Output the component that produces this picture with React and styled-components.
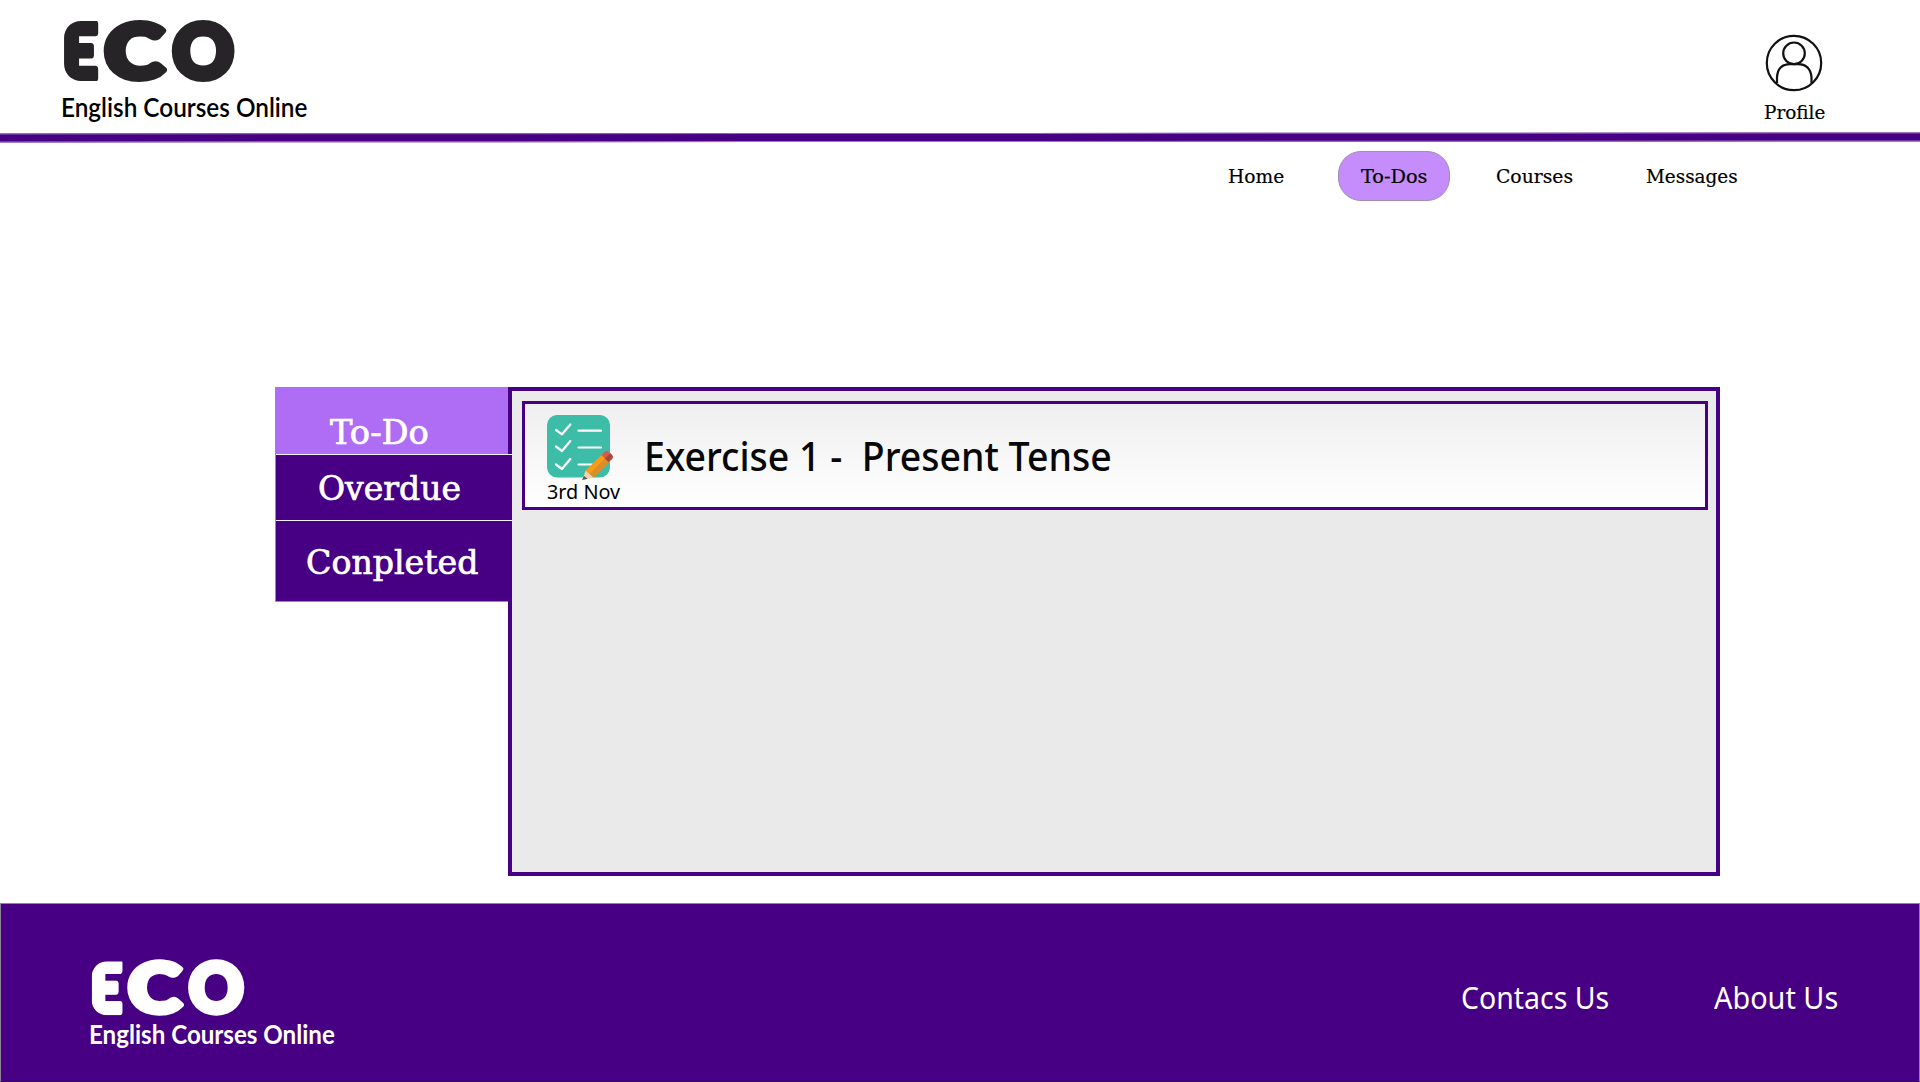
import React, { useId, useLayoutEffect, useRef, useState } from "react";
import styled, { createGlobalStyle } from "styled-components";

const purple = "#470084";
const slab = '"DejaVu Serif", "Liberation Serif", serif';
const sans = '"Noto Sans", "Open Sans", sans-serif';
const rounded = 'Lato, "Open Sans", sans-serif';

const Global = createGlobalStyle`
  body { margin: 0; background: #fff; color: #000; overflow: hidden; }
  * { box-sizing: border-box; }
`;

const Page = styled.div`
  width: 1920px;
  height: 1082px;
  display: flex;
  flex-direction: column;
  overflow: hidden;
`;

const FitBox = styled.span`
  display: block;
  width: ${(p) => p.$width}px;
  height: ${(p) => p.$line}px;
  line-height: ${(p) => p.$line}px;
  font-family: ${(p) => p.$family};
  font-size: ${(p) => p.$size}px;
  font-weight: ${(p) => p.$weight || 400};
  -webkit-text-stroke: ${(p) => p.$stroke || 0}px currentColor;
  white-space: pre;
`;
const FitInner = styled.span`
  display: inline-block;
  transform-origin: left center;
`;

/* Keeps a label at a set width whatever face it falls back to. */
function Fit({ width, line, family, size, weight, stroke, children }) {
  const ref = useRef(null);
  const [scale, setScale] = useState(1);
  useLayoutEffect(() => {
    setScale(width / ref.current.offsetWidth);
  }, [width, children]);
  return (
    <FitBox $width={width} $line={line} $family={family} $size={size} $weight={weight} $stroke={stroke}>
      <FitInner ref={ref} style={{ transform: `scaleX(${scale})` }}>{children}</FitInner>
    </FitBox>
  );
}

const Header = styled.header`
  height: 132px;
  flex: none;
  display: flex;
  justify-content: space-between;
  padding: 16px 95px 0 61px;
`;
const Brand = styled.div`
  display: flex;
  flex-direction: column;
`;
const Mark = styled.svg`
  display: block;
  width: ${(p) => p.$w}px;
  height: ${(p) => p.$h}px;
  margin-bottom: ${(p) => p.$gap}px;
  font-family: ${rounded};
  font-weight: 900;
  overflow: visible;
`;
const Profile = styled.a`
  display: flex;
  flex-direction: column;
  align-items: center;
  padding-top: 16px;
  gap: 6px;
`;
const Avatar = styled.svg`
  display: block;
  width: 62px;
  height: 62px;
`;
const Rule = styled.div`
  height: 9px;
  flex: none;
  margin-top: 0.5px;
  background: ${purple};
  border-top: 1px solid #8f68b7;
  border-bottom: 1px solid #9e78c4;
  transform: skewY(-0.03deg);
`;
const Nav = styled.nav`
  display: flex;
  justify-content: flex-end;
  padding: 9.5px 160px 0 0;
  flex: none;
`;
const NavItem = styled.a`
  height: 50px;
  display: flex;
  align-items: center;
  padding: 0 22px;
  margin-left: ${(p) => p.$gap}px;
  border-radius: 23px;
  border: ${(p) => (p.$active ? "1px solid #a08cb4" : "0")};
  background: ${(p) => (p.$active ? "#c48dfb" : "transparent")};
`;
const Main = styled.main`
  display: flex;
  align-items: flex-start;
  padding: 186px 200px 0 275px;
  height: 702px;
  flex: none;
`;
const Tabs = styled.div`
  width: 233px;
  flex: none;
  display: flex;
  flex-direction: column;
  border: 1px solid #94909b;
  border-right: 0;
`;
const Tab = styled.a`
  height: ${(p) => p.$h}px;
  margin-right: ${(p) => (p.$active ? 0 : -4)}px;
  padding: ${(p) => p.$top}px 0 0 ${(p) => p.$left}px;
  position: relative;
  color: #fff;
  background: ${(p) => (p.$active ? "#af6df5" : purple)};
  border-top: ${(p) => (p.$active ? "0" : "1px solid #f3eef8")};
`;
const Panel = styled.section`
  flex: 1;
  height: 489px;
  border: 4px solid ${purple};
  background: #eaeaea;
  padding: 10px 8px 0 10px;
`;
const Card = styled.article`
  height: 109px;
  border: 3px solid ${purple};
  background: linear-gradient(#efefef, #fff);
  display: flex;
  padding: 11px 0 0 22px;
`;
const Due = styled.div`
  width: 97px;
  display: flex;
  flex-direction: column;
`;
const TaskIcon = styled.svg`
  display: block;
  width: 67px;
  height: 65px;
`;
const Title = styled.h2`
  margin: 0;
  padding-top: 14px;
  color: #080808;
`;
const Footer = styled.footer`
  flex: 1;
  display: flex;
  justify-content: space-between;
  background: ${purple};
  color: #fff;
  border: 1px solid #8c8398;
  border-bottom-color: #32105a;
  padding: 53px 81px 0 88px;
`;
const Links = styled.div`
  display: flex;
  gap: 105px;
  padding-top: 20px;
`;

function Logo({ width, height, color, gap = 0 }) {
  const clip = useId();
  return (
    <Mark $w={width} $h={height} $gap={gap} viewBox="61 16 180 76" preserveAspectRatio="xMinYMin meet"
      fill={color} stroke={color} strokeLinejoin="round" strokeWidth="7" fontSize="75">
      <clipPath id={clip}>
        <rect x="64" y="21" width="56" height="60" rx="17" />
        <rect x="84" y="21" width="14.500" height="60" />
      </clipPath>
      <g clipPath={`url(#${clip})`}>
        <text transform="translate(62.3 78) scale(0.82 1)">E</text>
      </g>
      <text transform="translate(104.800 77.5) scale(1.19 1)">C</text>
      <text transform="translate(172.800 77.5) scale(1 1)">O</text>
    </Mark>
  );
}

const Tagline = ({ weight }) => (
  <Fit width={246} line={30} family={rounded} size={26} weight={weight}>English Courses Online</Fit>
);

const navItems = [
  ["Home", 56, 0],
  ["To-Dos", 66, 32],
  ["Courses", 77, 24],
  ["Messages", 92, 29],
];

export default function App() {
  return (
    <Page>
      <Global />
      <Header>
        <Brand>
          <Logo width={180} height={76} color="#262427" />
          <Tagline weight={600} />
        </Brand>
        <Profile>
          <Avatar viewBox="1763 32 62 62" fill="none" stroke="#111" strokeWidth="2.2">
            <circle cx="1794" cy="63" r="27.2" />
            <circle cx="1794" cy="53.3" r="10.8" />
            <path d="M1777 83V77Q1778 64.2 1790 64.2H1798Q1810 64.2 1811.5 77V83" />
          </Avatar>
          <Fit width={61} line={24} family={slab} size={19} stroke={0.2}>Profile</Fit>
        </Profile>
      </Header>
      <Rule />
      <Nav>
        {navItems.map(([label, width, gap]) => (
          <NavItem key={label} $gap={gap} $active={label === "To-Dos"}>
            <Fit width={width} line={26} family={slab} size={19} stroke={0.2}>{label}</Fit>
          </NavItem>
        ))}
      </Nav>
      <Main>
        <Tabs>
          <Tab $active $h={66} $top={25} $left={54}>
            <Fit width={99} line={40} family={slab} size={33} stroke={0.7}>To-Do</Fit>
          </Tab>
          <Tab $h={66} $top={14} $left={42}>
            <Fit width={143} line={40} family={slab} size={33} stroke={0.7}>Overdue</Fit>
          </Tab>
          <Tab $h={81} $top={22} $left={30}>
            <Fit width={173} line={40} family={slab} size={33} stroke={0.7}>Conpleted</Fit>
          </Tab>
        </Tabs>
        <Panel>
          <Card>
            <Due>
              <TaskIcon viewBox="547 415 67 65" fill="none">
                <rect x="547" y="415" width="63" height="62.5" rx="10" fill="#3dbda7" />
                <g stroke="#fff" strokeWidth="2.2" strokeLinecap="round" strokeLinejoin="round">
                  <path d="M556 430l6 4.3 8.3-9.8M556 446.500l6 4.500 8.300-10M556 464.500l6 4.500 8.300-10" />
                  <path d="M578.500 430.700H601M578.500 447.500H601M578.500 464.500H592" />
                </g>
                <path d="M585.500 470.500L602 454.500L609.500 461.500L593.500 477.500Z" fill="#f49c1c" />
                <path d="M589.500 474L605.500 458L609.500 461.500L593.500 477.500Z" fill="#df8b27" />
                <path d="M601.500 455L605 451.500Q607 450 609 452L612 455Q613.800 457 612 459L608.500 462Z" fill="#d85c4d" />
                <path d="M605 458.500L610.300 453.300L612 455Q613.800 457 612 459L608.500 462Z" fill="#a84643" />
                <path d="M585.500 470.500L593.500 477.500L584.500 480L583 478.500Z" fill="#f0d4b0" />
                <path d="M584 476L587.500 478.800L582 480Z" fill="#555360" />
              </TaskIcon>
              <Fit width={73} line={24} family={sans} size={19}>3rd Nov</Fit>
            </Due>
            <Title>
              <Fit width={468} line={54} family={sans} size={39} weight={500}>{"Exercise 1 -  Present Tense"}</Fit>
            </Title>
          </Card>
        </Panel>
      </Main>
      <Footer>
        <Brand>
          <Logo width={161} height={68} gap={-6} color="#fff" />
          <Tagline weight={700} />
        </Brand>
        <Links>
          <Fit width={148} line={42} family={sans} size={30}>Contacs Us</Fit>
          <Fit width={124} line={42} family={sans} size={30}>About Us</Fit>
        </Links>
      </Footer>
    </Page>
  );
}
